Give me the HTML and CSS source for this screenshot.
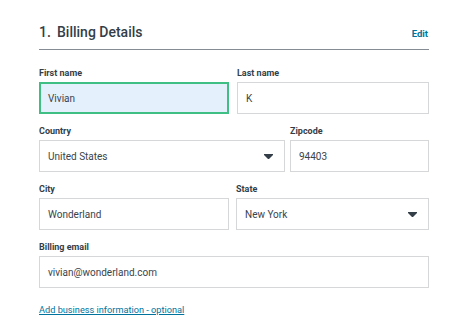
FILE: index.html
```html
<!DOCTYPE html>
<html lang="en">
<head>
<meta charset="utf-8">
<title>Billing Details</title>
<link rel="stylesheet" href="styles.css">
</head>
<body>
<section class="billing">
  <header class="billing-header">
    <h2 class="billing-title"><span class="step">1.</span>Billing Details</h2>
    <a class="edit-link" href="#">Edit</a>
  </header>
  <form class="billing-form">
    <div class="row row-names">
      <div class="field">
        <label class="field-label">First name</label>
        <div class="input input-active">Vivian</div>
      </div>
      <div class="field">
        <label class="field-label">Last name</label>
        <div class="input">K</div>
      </div>
    </div>
    <div class="row row-country">
      <div class="field">
        <label class="field-label">Country</label>
        <div class="input select">United States
          <svg class="caret" width="9" height="5" viewBox="0 0 9 5"><polygon points="0,0 9,0 9,1 5,5 4,5 0,1" fill="#333e48"/></svg>
        </div>
      </div>
      <div class="field">
        <label class="field-label">Zipcode</label>
        <div class="input">94403</div>
      </div>
    </div>
    <div class="row row-city">
      <div class="field">
        <label class="field-label">City</label>
        <div class="input">Wonderland</div>
      </div>
      <div class="field">
        <label class="field-label">State</label>
        <div class="input select">New York
          <svg class="caret" width="9" height="5" viewBox="0 0 9 5"><polygon points="0,0 9,0 9,1 5,5 4,5 0,1" fill="#333e48"/></svg>
        </div>
      </div>
    </div>
    <div class="row row-email">
      <div class="field">
        <label class="field-label">Billing email</label>
        <div class="input">vivian@wonderland.com</div>
      </div>
    </div>
    <a class="add-link" href="#">Add business information - optional</a>
  </form>
</section>
</body>
</html>
```

FILE: styles.css
```css
* { box-sizing: border-box; }
body {
  margin: 0;
  background: #fff;
  font-family: Roboto, "Liberation Sans", sans-serif;
  color: #333e48;
}
.billing {
  width: 468px;
  padding: 20px 39px 0 39px;
}
.billing-header {
  display: flex;
  align-items: center;
  justify-content: space-between;
  height: 30px;
  padding-bottom: 6px;
  border-bottom: 1px solid #858c93;
}
.billing-title {
  margin: 0;
  font-size: 14px;
  font-weight: 500;
  line-height: 24px;
  color: #333e48;
}
.step {
  display: inline-block;
  width: 18px;
}
.edit-link {
  font-size: 9.5px;
  font-weight: 700;
  color: #00739d;
  text-decoration: none;
  margin-top: 4px;
  margin-right: 1px;
}
.billing-form {
  display: flex;
  flex-direction: column;
  gap: 11px;
  padding-top: 17px;
}
.row {
  display: grid;
  grid-template-columns: 1fr;
}
.row-names { grid-template-columns: 190px 1fr; column-gap: 8px; }
.row-country { grid-template-columns: 246px 1fr; column-gap: 5px; }
.row-city { grid-template-columns: 190px 1fr; column-gap: 7px; }
.field {
  display: flex;
  flex-direction: column;
}
.field-label {
  font-size: 9px;
  font-weight: 700;
  line-height: 12px;
  margin-bottom: 3px;
}
.input {
  height: 32px;
  border: 1px solid #d5d7d9;
  padding: 0 8px;
  display: flex;
  align-items: center;
  font-size: 10px;
  padding-top: 1px;
  color: #3a444d;
}
.input-active {
  border: 2px solid #3fbf84;
  padding-left: 7px;
  background: #e5f0fd;
}
.select {
  justify-content: space-between;
  padding-right: 11px;
}
.caret { display: block; }
.add-link {
  margin-top: 5px;
  align-self: flex-start;
  font-size: 9.2px;
  line-height: 12px;
  color: #00739d;
  text-decoration: underline;
}
```
